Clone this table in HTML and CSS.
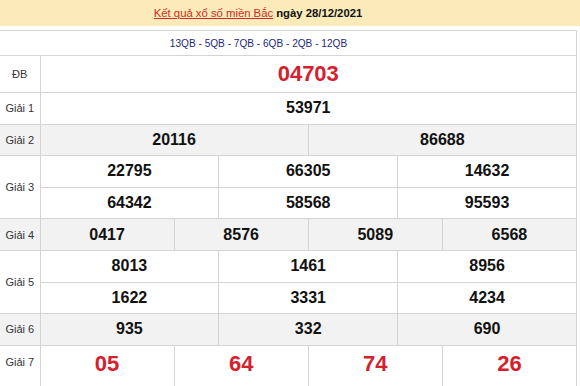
FILE: index.html
```html
<!DOCTYPE html>
<html lang="vi">
<head>
<meta charset="utf-8">
<link rel="stylesheet" href="styles.css">
</head>
<body>
<div class="title">
  <a class="title-link" href="#">Kết quả xổ số miền Bắc</a> <b>ngày 28/12/2021</b>
</div>
<table class="kq">
  <colgroup>
    <col class="c-label">
    <col class="c"><col class="c"><col class="c"><col class="c"><col class="c"><col class="c">
    <col class="c"><col class="c"><col class="c"><col class="c"><col class="c"><col class="c">
  </colgroup>
  <tr class="r-codes">
    <td class="codes" colspan="13">13QB - 5QB - 7QB - 6QB - 2QB - 12QB</td>
  </tr>
  <tr class="r-db">
    <td class="lbl">ĐB</td>
    <td class="num red big" colspan="12">04703</td>
  </tr>
  <tr class="r">
    <td class="lbl">Giải 1</td>
    <td class="num" colspan="12">53971</td>
  </tr>
  <tr class="r alt">
    <td class="lbl">Giải 2</td>
    <td class="num" colspan="6">20116</td>
    <td class="num" colspan="6">86688</td>
  </tr>
  <tr class="r">
    <td class="lbl" rowspan="2">Giải 3</td>
    <td class="num" colspan="4">22795</td>
    <td class="num" colspan="4">66305</td>
    <td class="num" colspan="4">14632</td>
  </tr>
  <tr class="r">
    <td class="num" colspan="4">64342</td>
    <td class="num" colspan="4">58568</td>
    <td class="num" colspan="4">95593</td>
  </tr>
  <tr class="r alt">
    <td class="lbl">Giải 4</td>
    <td class="num" colspan="3">0417</td>
    <td class="num" colspan="3">8576</td>
    <td class="num" colspan="3">5089</td>
    <td class="num" colspan="3">6568</td>
  </tr>
  <tr class="r">
    <td class="lbl" rowspan="2">Giải 5</td>
    <td class="num" colspan="4">8013</td>
    <td class="num" colspan="4">1461</td>
    <td class="num" colspan="4">8956</td>
  </tr>
  <tr class="r">
    <td class="num" colspan="4">1622</td>
    <td class="num" colspan="4">3331</td>
    <td class="num" colspan="4">4234</td>
  </tr>
  <tr class="r alt">
    <td class="lbl">Giải 6</td>
    <td class="num" colspan="4">935</td>
    <td class="num" colspan="4">332</td>
    <td class="num" colspan="4">690</td>
  </tr>
  <tr class="r-7">
    <td class="lbl">Giải 7</td>
    <td class="num red big" colspan="3">05</td>
    <td class="num red big" colspan="3">64</td>
    <td class="num red big" colspan="3">74</td>
    <td class="num red big" colspan="3">26</td>
  </tr>
</table>
</body>
</html>
```

FILE: styles.css
```css
html, body {
  margin: 0;
  padding: 0;
  background: #fff;
  font-family: "Liberation Sans", Arial, sans-serif;
}

.title {
  height: 26px;
  line-height: 26px;
  background: #fbebb8;
  text-align: center;
  font-size: 11.3px;
  color: #111;
  margin-bottom: 4px;
  padding-right: 64px;
}

.title-link {
  color: #d12a26;
  text-decoration: underline;
}

.title b {
  font-weight: bold;
}

.kq {
  border-collapse: collapse;
  table-layout: fixed;
  width: 577px;
}

.c-label { width: 40px; }

.kq td {
  border: 1px solid #d4d4d4;
  padding: 0;
  text-align: center;
  vertical-align: middle;
}

.kq tr td:first-child { border-left: none; }

.kq .codes {
  height: 24px;
  font-size: 10.1px;
  color: #1b2a78;
  padding-right: 59px;
}

.r-db td { height: 36px; }
.r td { height: 30.6px; }

.kq .r-7 td {
  height: 40px;
  border-bottom: none;
  vertical-align: top;
  padding-top: 5px;
}

.kq .r-7 .lbl { padding-top: 10px; }

.alt td { background: #f2f2f2; }

.lbl {
  font-size: 11px;
  color: #333;
}

.num {
  font-size: 16px;
  font-weight: bold;
  color: #111;
}

.red { color: #d3212d; }
.big { font-size: 22px; }
```
